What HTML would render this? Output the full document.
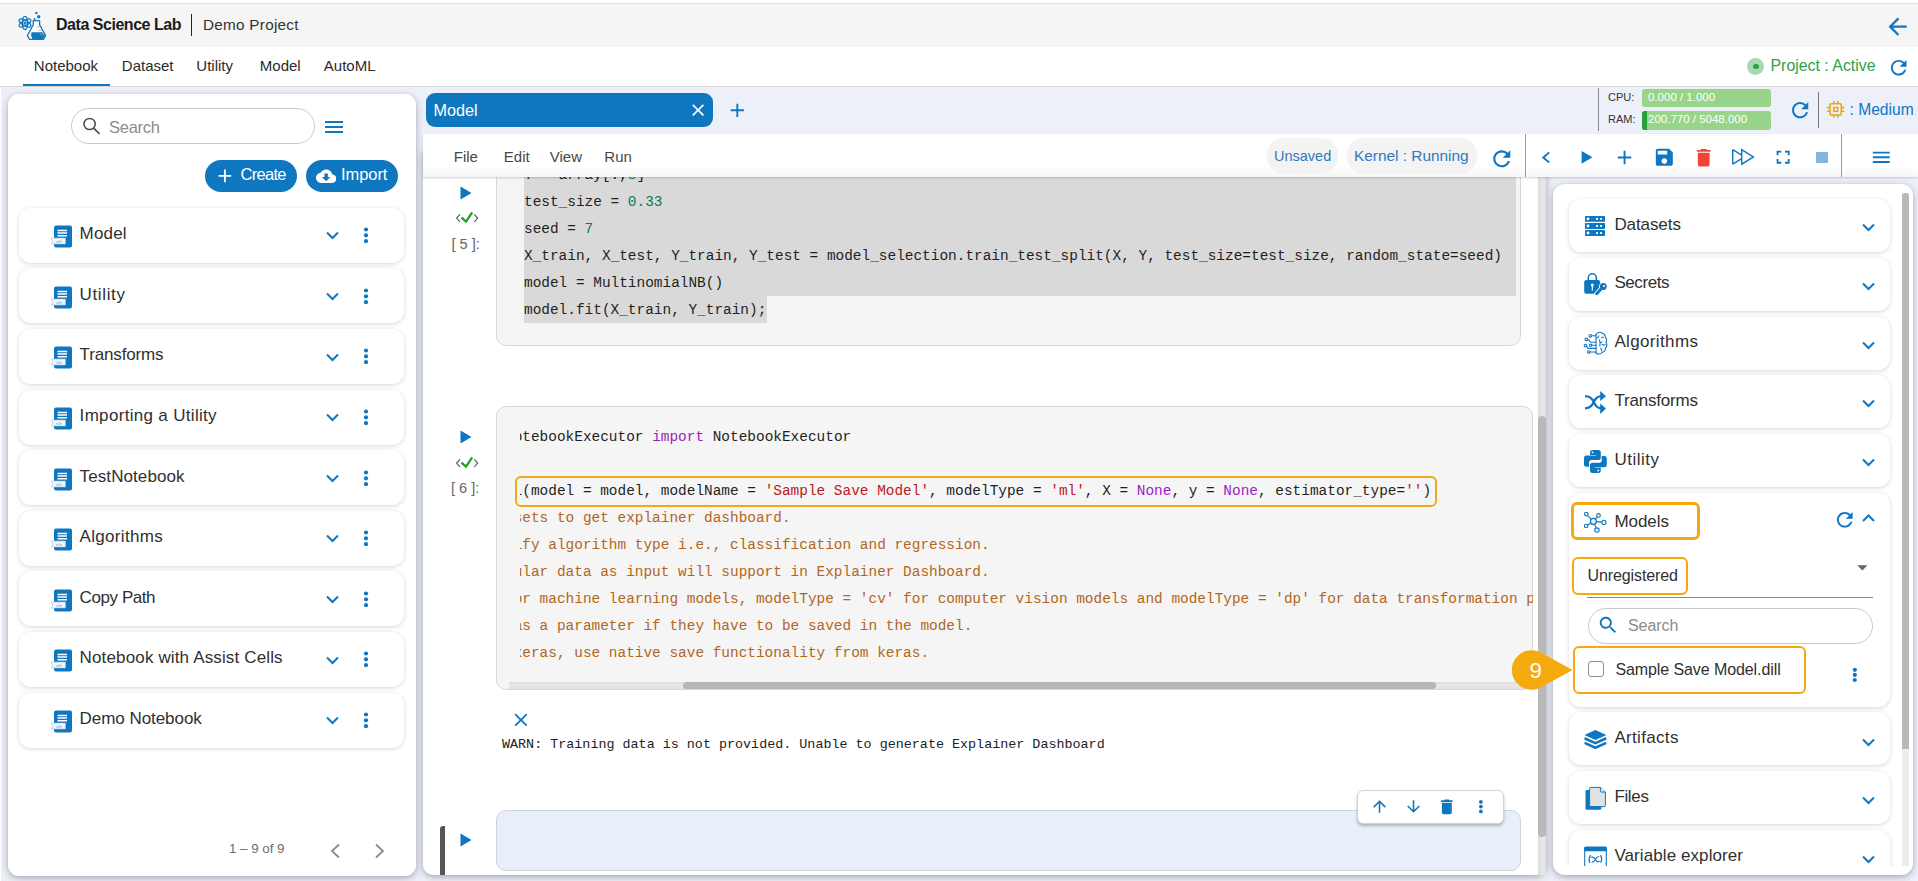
<!DOCTYPE html><html><head><meta charset="utf-8"><style>html,body{margin:0;padding:0;width:1918px;height:881px;overflow:hidden;background:#edf0f9;font-family:"Liberation Sans",sans-serif;}body{position:relative;}</style></head><body>
<div style="position:absolute;left:0px;top:0px;width:1918px;height:3px;background:#fff"></div>
<div style="position:absolute;left:0px;top:3px;width:1918px;height:44px;background:#f5f5f5;border-top:1px solid #e2e2e2;box-sizing:border-box"></div>
<svg style="position:absolute;left:14px;top:8px;" width="40" height="36" viewBox="14 8 40 36"><g fill="none" stroke="#0f77c0" stroke-width="1.25"><ellipse cx="25" cy="23" rx="6.6" ry="2.6" transform="rotate(90 25 23)"/><ellipse cx="25" cy="23" rx="6.6" ry="2.6" transform="rotate(30 25 23)"/><ellipse cx="25" cy="23" rx="6.6" ry="2.6" transform="rotate(-30 25 23)"/><circle cx="25" cy="23" r="1"/></g><path d="M33.3 20.6 H39.6 V24.8 L45.6 35.6 L43.4 39.4 H29.6 L27.4 35.6 L33.3 24.8 Z" fill="#fff" stroke="#0f77c0" stroke-width="1.3" stroke-linejoin="round"/><path d="M31.6 32.2 H42.2 L45 35.6 L43 39 H32.5 L31 35.6 Z" fill="#0f77c0"/><g stroke="#9aa" stroke-width="0.8"><path d="M36.5 26.8H40.3M38 30.3H41.5M40 34.2H44"/></g><circle cx="36.4" cy="13" r="1.2" fill="#0f77c0"/><circle cx="38.7" cy="16.8" r="1.7" fill="#0f77c0"/><circle cx="34.6" cy="19" r="1" fill="#0f77c0"/></svg>
<div style="position:absolute;left:56px;top:16.56px;font-family:'Liberation Sans', sans-serif;font-size:16px;line-height:16px;color:#1b1b1b;font-weight:bold;white-space:pre;letter-spacing:-0.467px">Data Science Lab</div>
<div style="position:absolute;left:190.8px;top:14px;width:1.6px;height:21.7px;background:#222"></div>
<div style="position:absolute;left:203px;top:17.15px;font-family:'Liberation Sans', sans-serif;font-size:15.3px;line-height:15.3px;color:#333;font-weight:normal;white-space:pre;letter-spacing:0.255px">Demo Project</div>
<svg style="position:absolute;left:1884.25px;top:13.15px" width="27.30" height="27.30" viewBox="0 0 24 24"><path d="M20 11H7.83l5.59-5.59L12 4l-8 8 8 8 1.41-1.41L7.83 13H20v-2z" fill="#0f77c0"/></svg>
<div style="position:absolute;left:0px;top:47px;width:1918px;height:39px;background:#fff"></div>
<div style="position:absolute;left:0px;top:86px;width:1918px;height:1px;background:#d8d8d8"></div>
<div style="position:absolute;left:33.8px;top:57.70px;font-family:'Liberation Sans', sans-serif;font-size:15px;line-height:15px;color:#2b2b2b;font-weight:normal;white-space:pre;">Notebook</div>
<div style="position:absolute;left:121.8px;top:57.70px;font-family:'Liberation Sans', sans-serif;font-size:15px;line-height:15px;color:#2b2b2b;font-weight:normal;white-space:pre;">Dataset</div>
<div style="position:absolute;left:196.3px;top:57.70px;font-family:'Liberation Sans', sans-serif;font-size:15px;line-height:15px;color:#2b2b2b;font-weight:normal;white-space:pre;">Utility</div>
<div style="position:absolute;left:259.8px;top:57.70px;font-family:'Liberation Sans', sans-serif;font-size:15px;line-height:15px;color:#2b2b2b;font-weight:normal;white-space:pre;">Model</div>
<div style="position:absolute;left:323.8px;top:57.70px;font-family:'Liberation Sans', sans-serif;font-size:15px;line-height:15px;color:#2b2b2b;font-weight:normal;white-space:pre;">AutoML</div>
<div style="position:absolute;left:23px;top:84px;width:87px;height:2px;background:#0f77c0"></div>
<div style="position:absolute;left:1747px;top:58px;width:17px;height:17px;border-radius:50%;background:#a6dab2"></div>
<div style="position:absolute;left:1753px;top:64px;width:6px;height:5px;border-radius:50%;background:#2aa148"></div>
<div style="position:absolute;left:1770.5px;top:57.64px;font-family:'Liberation Sans', sans-serif;font-size:15.9px;line-height:15.9px;color:#2ba34a;font-weight:normal;white-space:pre;">Project : Active</div>
<svg style="position:absolute;left:1886.90px;top:55.80px" width="23.40" height="23.40" viewBox="0 0 24 24"><path d="M17.65 6.35C16.2 4.9 14.21 4 12 4c-4.42 0-7.99 3.58-7.99 8s3.57 8 7.99 8c3.73 0 6.84-2.55 7.73-6h-2.08c-.82 2.33-3.04 4-5.65 4-3.31 0-6-2.69-6-6s2.69-6 6-6c1.66 0 3.14.69 4.22 1.78L13 11h7V4l-2.35 2.35z" fill="#0f77c0"/></svg>
<div style="position:absolute;left:0px;top:87px;width:1px;height:794px;background:#fff"></div>
<div style="position:absolute;left:8px;top:94px;width:408px;height:782px;background:#fff;border-radius:11px;box-shadow:0 2px 7px rgba(60,64,82,0.42)"></div>
<div style="position:absolute;left:71px;top:108px;width:244px;height:36px;box-sizing:border-box;border:1px solid #c9c9c9;border-radius:18px;background:#fff"></div>
<svg style="position:absolute;left:80px;top:114px;overflow:visible" width="24" height="24" viewBox="80 114 24 24"><g fill="none" stroke="#4a4a4a"><circle cx="89.6" cy="124" r="5.6" stroke-width="1.5"/><path d="M93.7 128.1 L99.6 134" stroke-width="1.7"/></g></svg>
<div style="position:absolute;left:109px;top:118.83px;font-family:'Liberation Sans', sans-serif;font-size:16.5px;line-height:16.5px;color:#8c8c8c;font-weight:normal;white-space:pre;letter-spacing:-0.260px">Search</div>
<svg style="position:absolute;left:322.00px;top:115.00px" width="24.00" height="24.00" viewBox="0 0 24 24"><path d="M3 18h18v-2H3v2zm0-5h18v-2H3v2zm0-7v2h18V6H3z" fill="#0f77c0"/></svg>
<div style="position:absolute;left:205px;top:160px;width:92px;height:32px;border-radius:16px;background:#0f77c0"></div>
<svg style="position:absolute;left:214.46px;top:165.46px" width="21.77" height="21.77" viewBox="0 0 24 24"><path d="M19 13h-6v6h-2v-6H5v-2h6V5h2v6h6v2z" fill="#fff"/></svg>
<div style="position:absolute;left:240.5px;top:166.23px;font-family:'Liberation Sans', sans-serif;font-size:16.5px;line-height:16.5px;color:#fff;font-weight:normal;white-space:pre;letter-spacing:-0.700px">Create</div>
<div style="position:absolute;left:306px;top:160px;width:92px;height:32px;border-radius:16px;background:#0f77c0"></div>
<svg style="position:absolute;left:315.70px;top:166.42px" width="20.30" height="20.30" viewBox="0 0 24 24"><path d="M19.35 10.04C18.67 6.59 15.64 4 12 4 9.11 4 6.6 5.64 5.35 8.04 2.34 8.36 0 10.91 0 14c0 3.31 2.69 6 6 6h13c2.76 0 5-2.24 5-5 0-2.64-2.05-4.78-4.65-4.96zM17 13l-5 5-5-5h3V9h4v4h3z" fill="#fff"/></svg>
<div style="position:absolute;left:341px;top:166.23px;font-family:'Liberation Sans', sans-serif;font-size:16.5px;line-height:16.5px;color:#fff;font-weight:normal;white-space:pre;letter-spacing:-0.070px">Import</div>
<div style="position:absolute;left:19px;top:207.70px;width:385px;height:55px;background:#fff;border-radius:12px;box-shadow:0 1px 4px rgba(0,0,0,0.16)"></div>
<svg style="position:absolute;left:51px;top:225.0px;" width="22" height="23" viewBox="0 0 22 23"><rect x="3" y="0.5" width="18" height="22" rx="2" fill="#0f77c0"/><g stroke="#fff" stroke-width="1.6"><path d="M6.5 5.5H16M6.5 8H16M6.5 10.8H16"/></g><path d="M0 13 L14.5 13 L14.5 19 L0 19 L2 16 Z" fill="#f4f6f8" stroke="#9cc3e6" stroke-width="0.6"/><text x="8" y="17.6" font-size="4" fill="#0f77c0" font-family="Liberation Sans" text-anchor="middle">&lt;/&gt;</text></svg>
<div style="position:absolute;left:79.6px;top:225.41px;font-family:'Liberation Sans', sans-serif;font-size:17px;line-height:17px;color:#303030;font-weight:normal;white-space:pre;letter-spacing:0.175px">Model</div>
<svg style="position:absolute;left:325.5px;top:231.29999999999998px;" width="13" height="9" viewBox="0 0 13 9"><path d="M1 1.5 L6.5 7 L12 1.5" fill="none" stroke="#0f77c0" stroke-width="2"/></svg>
<svg style="position:absolute;left:363.1px;top:227.0px;" width="6" height="16" viewBox="0 0 6 16"><circle cx="3" cy="2.50" r="2.1" fill="#0f77c0"/><circle cx="3" cy="8.30" r="2.1" fill="#0f77c0"/><circle cx="3" cy="14.10" r="2.1" fill="#0f77c0"/></svg>
<div style="position:absolute;left:19px;top:268.32px;width:385px;height:55px;background:#fff;border-radius:12px;box-shadow:0 1px 4px rgba(0,0,0,0.16)"></div>
<svg style="position:absolute;left:51px;top:285.625px;" width="22" height="23" viewBox="0 0 22 23"><rect x="3" y="0.5" width="18" height="22" rx="2" fill="#0f77c0"/><g stroke="#fff" stroke-width="1.6"><path d="M6.5 5.5H16M6.5 8H16M6.5 10.8H16"/></g><path d="M0 13 L14.5 13 L14.5 19 L0 19 L2 16 Z" fill="#f4f6f8" stroke="#9cc3e6" stroke-width="0.6"/><text x="8" y="17.6" font-size="4" fill="#0f77c0" font-family="Liberation Sans" text-anchor="middle">&lt;/&gt;</text></svg>
<div style="position:absolute;left:79.6px;top:285.94px;font-family:'Liberation Sans', sans-serif;font-size:17px;line-height:17px;color:#303030;font-weight:normal;white-space:pre;letter-spacing:0.625px">Utility</div>
<svg style="position:absolute;left:325.5px;top:291.925px;" width="13" height="9" viewBox="0 0 13 9"><path d="M1 1.5 L6.5 7 L12 1.5" fill="none" stroke="#0f77c0" stroke-width="2"/></svg>
<svg style="position:absolute;left:363.1px;top:287.625px;" width="6" height="16" viewBox="0 0 6 16"><circle cx="3" cy="2.50" r="2.1" fill="#0f77c0"/><circle cx="3" cy="8.30" r="2.1" fill="#0f77c0"/><circle cx="3" cy="14.10" r="2.1" fill="#0f77c0"/></svg>
<div style="position:absolute;left:19px;top:328.95px;width:385px;height:55px;background:#fff;border-radius:12px;box-shadow:0 1px 4px rgba(0,0,0,0.16)"></div>
<svg style="position:absolute;left:51px;top:346.25px;" width="22" height="23" viewBox="0 0 22 23"><rect x="3" y="0.5" width="18" height="22" rx="2" fill="#0f77c0"/><g stroke="#fff" stroke-width="1.6"><path d="M6.5 5.5H16M6.5 8H16M6.5 10.8H16"/></g><path d="M0 13 L14.5 13 L14.5 19 L0 19 L2 16 Z" fill="#f4f6f8" stroke="#9cc3e6" stroke-width="0.6"/><text x="8" y="17.6" font-size="4" fill="#0f77c0" font-family="Liberation Sans" text-anchor="middle">&lt;/&gt;</text></svg>
<div style="position:absolute;left:79.6px;top:346.47px;font-family:'Liberation Sans', sans-serif;font-size:17px;line-height:17px;color:#303030;font-weight:normal;white-space:pre;letter-spacing:-0.144px">Transforms</div>
<svg style="position:absolute;left:325.5px;top:352.55px;" width="13" height="9" viewBox="0 0 13 9"><path d="M1 1.5 L6.5 7 L12 1.5" fill="none" stroke="#0f77c0" stroke-width="2"/></svg>
<svg style="position:absolute;left:363.1px;top:348.25px;" width="6" height="16" viewBox="0 0 6 16"><circle cx="3" cy="2.50" r="2.1" fill="#0f77c0"/><circle cx="3" cy="8.30" r="2.1" fill="#0f77c0"/><circle cx="3" cy="14.10" r="2.1" fill="#0f77c0"/></svg>
<div style="position:absolute;left:19px;top:389.57px;width:385px;height:55px;background:#fff;border-radius:12px;box-shadow:0 1px 4px rgba(0,0,0,0.16)"></div>
<svg style="position:absolute;left:51px;top:406.875px;" width="22" height="23" viewBox="0 0 22 23"><rect x="3" y="0.5" width="18" height="22" rx="2" fill="#0f77c0"/><g stroke="#fff" stroke-width="1.6"><path d="M6.5 5.5H16M6.5 8H16M6.5 10.8H16"/></g><path d="M0 13 L14.5 13 L14.5 19 L0 19 L2 16 Z" fill="#f4f6f8" stroke="#9cc3e6" stroke-width="0.6"/><text x="8" y="17.6" font-size="4" fill="#0f77c0" font-family="Liberation Sans" text-anchor="middle">&lt;/&gt;</text></svg>
<div style="position:absolute;left:79.6px;top:407.00px;font-family:'Liberation Sans', sans-serif;font-size:17px;line-height:17px;color:#303030;font-weight:normal;white-space:pre;letter-spacing:0.317px">Importing a Utility</div>
<svg style="position:absolute;left:325.5px;top:413.175px;" width="13" height="9" viewBox="0 0 13 9"><path d="M1 1.5 L6.5 7 L12 1.5" fill="none" stroke="#0f77c0" stroke-width="2"/></svg>
<svg style="position:absolute;left:363.1px;top:408.875px;" width="6" height="16" viewBox="0 0 6 16"><circle cx="3" cy="2.50" r="2.1" fill="#0f77c0"/><circle cx="3" cy="8.30" r="2.1" fill="#0f77c0"/><circle cx="3" cy="14.10" r="2.1" fill="#0f77c0"/></svg>
<div style="position:absolute;left:19px;top:450.20px;width:385px;height:55px;background:#fff;border-radius:12px;box-shadow:0 1px 4px rgba(0,0,0,0.16)"></div>
<svg style="position:absolute;left:51px;top:467.5px;" width="22" height="23" viewBox="0 0 22 23"><rect x="3" y="0.5" width="18" height="22" rx="2" fill="#0f77c0"/><g stroke="#fff" stroke-width="1.6"><path d="M6.5 5.5H16M6.5 8H16M6.5 10.8H16"/></g><path d="M0 13 L14.5 13 L14.5 19 L0 19 L2 16 Z" fill="#f4f6f8" stroke="#9cc3e6" stroke-width="0.6"/><text x="8" y="17.6" font-size="4" fill="#0f77c0" font-family="Liberation Sans" text-anchor="middle">&lt;/&gt;</text></svg>
<div style="position:absolute;left:79.6px;top:467.53px;font-family:'Liberation Sans', sans-serif;font-size:17px;line-height:17px;color:#303030;font-weight:normal;white-space:pre;letter-spacing:0.091px">TestNotebook</div>
<svg style="position:absolute;left:325.5px;top:473.8px;" width="13" height="9" viewBox="0 0 13 9"><path d="M1 1.5 L6.5 7 L12 1.5" fill="none" stroke="#0f77c0" stroke-width="2"/></svg>
<svg style="position:absolute;left:363.1px;top:469.5px;" width="6" height="16" viewBox="0 0 6 16"><circle cx="3" cy="2.50" r="2.1" fill="#0f77c0"/><circle cx="3" cy="8.30" r="2.1" fill="#0f77c0"/><circle cx="3" cy="14.10" r="2.1" fill="#0f77c0"/></svg>
<div style="position:absolute;left:19px;top:510.82px;width:385px;height:55px;background:#fff;border-radius:12px;box-shadow:0 1px 4px rgba(0,0,0,0.16)"></div>
<svg style="position:absolute;left:51px;top:528.125px;" width="22" height="23" viewBox="0 0 22 23"><rect x="3" y="0.5" width="18" height="22" rx="2" fill="#0f77c0"/><g stroke="#fff" stroke-width="1.6"><path d="M6.5 5.5H16M6.5 8H16M6.5 10.8H16"/></g><path d="M0 13 L14.5 13 L14.5 19 L0 19 L2 16 Z" fill="#f4f6f8" stroke="#9cc3e6" stroke-width="0.6"/><text x="8" y="17.6" font-size="4" fill="#0f77c0" font-family="Liberation Sans" text-anchor="middle">&lt;/&gt;</text></svg>
<div style="position:absolute;left:79.6px;top:528.06px;font-family:'Liberation Sans', sans-serif;font-size:17px;line-height:17px;color:#303030;font-weight:normal;white-space:pre;letter-spacing:0.311px">Algorithms</div>
<svg style="position:absolute;left:325.5px;top:534.425px;" width="13" height="9" viewBox="0 0 13 9"><path d="M1 1.5 L6.5 7 L12 1.5" fill="none" stroke="#0f77c0" stroke-width="2"/></svg>
<svg style="position:absolute;left:363.1px;top:530.125px;" width="6" height="16" viewBox="0 0 6 16"><circle cx="3" cy="2.50" r="2.1" fill="#0f77c0"/><circle cx="3" cy="8.30" r="2.1" fill="#0f77c0"/><circle cx="3" cy="14.10" r="2.1" fill="#0f77c0"/></svg>
<div style="position:absolute;left:19px;top:571.45px;width:385px;height:55px;background:#fff;border-radius:12px;box-shadow:0 1px 4px rgba(0,0,0,0.16)"></div>
<svg style="position:absolute;left:51px;top:588.75px;" width="22" height="23" viewBox="0 0 22 23"><rect x="3" y="0.5" width="18" height="22" rx="2" fill="#0f77c0"/><g stroke="#fff" stroke-width="1.6"><path d="M6.5 5.5H16M6.5 8H16M6.5 10.8H16"/></g><path d="M0 13 L14.5 13 L14.5 19 L0 19 L2 16 Z" fill="#f4f6f8" stroke="#9cc3e6" stroke-width="0.6"/><text x="8" y="17.6" font-size="4" fill="#0f77c0" font-family="Liberation Sans" text-anchor="middle">&lt;/&gt;</text></svg>
<div style="position:absolute;left:79.6px;top:588.59px;font-family:'Liberation Sans', sans-serif;font-size:17px;line-height:17px;color:#303030;font-weight:normal;white-space:pre;letter-spacing:-0.425px">Copy Path</div>
<svg style="position:absolute;left:325.5px;top:595.0500000000001px;" width="13" height="9" viewBox="0 0 13 9"><path d="M1 1.5 L6.5 7 L12 1.5" fill="none" stroke="#0f77c0" stroke-width="2"/></svg>
<svg style="position:absolute;left:363.1px;top:590.75px;" width="6" height="16" viewBox="0 0 6 16"><circle cx="3" cy="2.50" r="2.1" fill="#0f77c0"/><circle cx="3" cy="8.30" r="2.1" fill="#0f77c0"/><circle cx="3" cy="14.10" r="2.1" fill="#0f77c0"/></svg>
<div style="position:absolute;left:19px;top:632.08px;width:385px;height:55px;background:#fff;border-radius:12px;box-shadow:0 1px 4px rgba(0,0,0,0.16)"></div>
<svg style="position:absolute;left:51px;top:649.375px;" width="22" height="23" viewBox="0 0 22 23"><rect x="3" y="0.5" width="18" height="22" rx="2" fill="#0f77c0"/><g stroke="#fff" stroke-width="1.6"><path d="M6.5 5.5H16M6.5 8H16M6.5 10.8H16"/></g><path d="M0 13 L14.5 13 L14.5 19 L0 19 L2 16 Z" fill="#f4f6f8" stroke="#9cc3e6" stroke-width="0.6"/><text x="8" y="17.6" font-size="4" fill="#0f77c0" font-family="Liberation Sans" text-anchor="middle">&lt;/&gt;</text></svg>
<div style="position:absolute;left:79.6px;top:649.12px;font-family:'Liberation Sans', sans-serif;font-size:17px;line-height:17px;color:#303030;font-weight:normal;white-space:pre;letter-spacing:0.146px">Notebook with Assist Cells</div>
<svg style="position:absolute;left:325.5px;top:655.6750000000001px;" width="13" height="9" viewBox="0 0 13 9"><path d="M1 1.5 L6.5 7 L12 1.5" fill="none" stroke="#0f77c0" stroke-width="2"/></svg>
<svg style="position:absolute;left:363.1px;top:651.375px;" width="6" height="16" viewBox="0 0 6 16"><circle cx="3" cy="2.50" r="2.1" fill="#0f77c0"/><circle cx="3" cy="8.30" r="2.1" fill="#0f77c0"/><circle cx="3" cy="14.10" r="2.1" fill="#0f77c0"/></svg>
<div style="position:absolute;left:19px;top:692.70px;width:385px;height:55px;background:#fff;border-radius:12px;box-shadow:0 1px 4px rgba(0,0,0,0.16)"></div>
<svg style="position:absolute;left:51px;top:710.0px;" width="22" height="23" viewBox="0 0 22 23"><rect x="3" y="0.5" width="18" height="22" rx="2" fill="#0f77c0"/><g stroke="#fff" stroke-width="1.6"><path d="M6.5 5.5H16M6.5 8H16M6.5 10.8H16"/></g><path d="M0 13 L14.5 13 L14.5 19 L0 19 L2 16 Z" fill="#f4f6f8" stroke="#9cc3e6" stroke-width="0.6"/><text x="8" y="17.6" font-size="4" fill="#0f77c0" font-family="Liberation Sans" text-anchor="middle">&lt;/&gt;</text></svg>
<div style="position:absolute;left:79.6px;top:709.65px;font-family:'Liberation Sans', sans-serif;font-size:17px;line-height:17px;color:#303030;font-weight:normal;white-space:pre;letter-spacing:-0.050px">Demo Notebook</div>
<svg style="position:absolute;left:325.5px;top:716.3000000000001px;" width="13" height="9" viewBox="0 0 13 9"><path d="M1 1.5 L6.5 7 L12 1.5" fill="none" stroke="#0f77c0" stroke-width="2"/></svg>
<svg style="position:absolute;left:363.1px;top:712.0px;" width="6" height="16" viewBox="0 0 6 16"><circle cx="3" cy="2.50" r="2.1" fill="#0f77c0"/><circle cx="3" cy="8.30" r="2.1" fill="#0f77c0"/><circle cx="3" cy="14.10" r="2.1" fill="#0f77c0"/></svg>
<div style="position:absolute;left:229px;top:842.04px;font-family:'Liberation Sans', sans-serif;font-size:13.3px;line-height:13.3px;color:#6d6d6d;font-weight:normal;white-space:pre;">1 – 9 of 9</div>
<svg style="position:absolute;left:329px;top:843px;" width="12" height="16" viewBox="0 0 12 16"><path d="M10 1.5 L3 8 L10 14.5" fill="none" stroke="#8a8a8a" stroke-width="1.8"/></svg>
<svg style="position:absolute;left:374px;top:843px;" width="12" height="16" viewBox="0 0 12 16"><path d="M2 1.5 L9 8 L2 14.5" fill="none" stroke="#8a8a8a" stroke-width="1.8"/></svg>
<div style="position:absolute;left:426px;top:93px;width:287px;height:34px;border-radius:9px;background:#0f77c0"></div>
<div style="position:absolute;left:433.5px;top:101.59px;font-family:'Liberation Sans', sans-serif;font-size:16.2px;line-height:16.2px;color:#fff;font-weight:normal;white-space:pre;">Model</div>
<svg style="position:absolute;left:687.79px;top:99.59px" width="20.23" height="20.23" viewBox="0 0 24 24"><path d="M19 6.41L17.59 5 12 10.59 6.41 5 5 6.41 10.59 12 5 17.59 6.41 19 12 13.41 17.59 19 19 17.59 13.41 12z" fill="#fff"/></svg>
<svg style="position:absolute;left:726.29px;top:98.99px" width="22.63" height="22.63" viewBox="0 0 24 24"><path d="M19 13h-6v6h-2v-6H5v-2h6V5h2v6h6v2z" fill="#0f77c0"/></svg>
<div style="position:absolute;left:423px;top:150px;width:1123px;height:725px;background:#fff;border-radius:0 0 10px 10px;box-shadow:0 2px 7px rgba(60,64,82,0.42)"></div>
<div style="position:absolute;left:496px;top:150px;width:1025px;height:196px;box-sizing:border-box;border:1px solid #d8d8d8;border-radius:10px;background:#f5f5f5"></div>
<div style="position:absolute;left:524px;top:150px;width:992px;height:146px;background:#d9d9d9"></div>
<div style="position:absolute;left:524px;top:296px;width:242.5px;height:26.5px;background:#d9d9d9"></div>
<div style="position:absolute;left:524px;top:167.94px;font-family:'Liberation Mono', monospace;font-size:14.43px;line-height:14.43px;color:#1f1f1f;font-weight:normal;white-space:pre;">Y = array[:,<span style="color:#0d7a4e">8</span>]</div>
<div style="position:absolute;left:524px;top:194.94px;font-family:'Liberation Mono', monospace;font-size:14.43px;line-height:14.43px;color:#1f1f1f;font-weight:normal;white-space:pre;">test_size = <span style="color:#0d7a4e">0.33</span></div>
<div style="position:absolute;left:524px;top:221.94px;font-family:'Liberation Mono', monospace;font-size:14.43px;line-height:14.43px;color:#1f1f1f;font-weight:normal;white-space:pre;">seed = <span style="color:#0d7a4e">7</span></div>
<div style="position:absolute;left:524px;top:248.94px;font-family:'Liberation Mono', monospace;font-size:14.43px;line-height:14.43px;color:#1f1f1f;font-weight:normal;white-space:pre;">X_train, X_test, Y_train, Y_test = model_selection.train_test_split(X, Y, test_size=test_size, random_state=seed)</div>
<div style="position:absolute;left:524px;top:275.94px;font-family:'Liberation Mono', monospace;font-size:14.43px;line-height:14.43px;color:#1f1f1f;font-weight:normal;white-space:pre;">model = MultinomialNB()</div>
<div style="position:absolute;left:524px;top:302.94px;font-family:'Liberation Mono', monospace;font-size:14.43px;line-height:14.43px;color:#1f1f1f;font-weight:normal;white-space:pre;">model.fit(X_train, Y_train);</div>
<svg style="position:absolute;left:460px;top:186px;" width="12" height="14" viewBox="0 0 12 14"><path d="M0.5 0.5 L11.5 7 L0.5 13.5 Z" fill="#0f77c0"/></svg>
<svg style="position:absolute;left:450px;top:205.0px;overflow:visible" width="36" height="23.0" viewBox="450 205.0 36 23.0"><g transform="translate(0 0.0)"><g fill="none" stroke="#555" stroke-width="1.1"><path d="M460 214.3 L456.6 218.1 L460 221.9"/><path d="M474.3 214.3 L477.7 218.1 L474.3 221.9"/></g><path d="M461.5 217.6 L466 221.6 L472.2 212.3" fill="none" stroke="#19a319" stroke-width="2.2"/></g></svg>
<div style="position:absolute;left:451.5px;top:237.04px;font-family:'Liberation Sans', sans-serif;font-size:14.6px;line-height:14.6px;color:#666;font-weight:normal;white-space:pre;">[ 5 ]:</div>
<div style="position:absolute;left:496px;top:405.5px;width:1037px;height:284px;box-sizing:border-box;border:1px solid #d8d8d8;border-radius:10px;background:#f5f5f5;overflow:hidden"></div>
<div style="position:absolute;left:519.5px;top:420px;width:1013px;height:255px;overflow:hidden">
<div style="position:absolute;left:-5.86px;top:9.64px;font-family:'Liberation Mono', monospace;font-size:14.43px;line-height:14.43px;color:#1f1f1f;white-space:pre">otebookExecutor <span style="color:#9a1ec0">import</span> NotebookExecutor</div>
<div style="position:absolute;left:-5.86px;top:63.54px;font-family:'Liberation Mono', monospace;font-size:14.43px;line-height:14.43px;color:#1f1f1f;white-space:pre">l(model = model, modelName = <span style="color:#b81b1b">'Sample Save Model'</span>, modelType = <span style="color:#b81b1b">'ml'</span>, X = <span style="color:#9a1ec0">None</span>, y = <span style="color:#9a1ec0">None</span>, estimator_type=<span style="color:#b81b1b">''</span>)</div>
<div style="position:absolute;left:-5.86px;top:90.94px;font-family:'Liberation Mono', monospace;font-size:14.43px;line-height:14.43px;color:#b3661b;white-space:pre">sets to get explainer dashboard.</div>
<div style="position:absolute;left:-5.86px;top:117.94px;font-family:'Liberation Mono', monospace;font-size:14.43px;line-height:14.43px;color:#b3661b;white-space:pre">ify algorithm type i.e., classification and regression.</div>
<div style="position:absolute;left:-5.86px;top:144.94px;font-family:'Liberation Mono', monospace;font-size:14.43px;line-height:14.43px;color:#b3661b;white-space:pre">ular data as input will support in Explainer Dashboard.</div>
<div style="position:absolute;left:-5.86px;top:171.94px;font-family:'Liberation Mono', monospace;font-size:14.43px;line-height:14.43px;color:#b3661b;white-space:pre">or machine learning models, modelType = 'cv' for computer vision models and modelType = 'dp' for data transformation pipelines</div>
<div style="position:absolute;left:-5.86px;top:198.94px;font-family:'Liberation Mono', monospace;font-size:14.43px;line-height:14.43px;color:#b3661b;white-space:pre">as a parameter if they have to be saved in the model.</div>
<div style="position:absolute;left:-5.86px;top:225.94px;font-family:'Liberation Mono', monospace;font-size:14.43px;line-height:14.43px;color:#b3661b;white-space:pre">keras, use native save functionality from keras.</div>
</div>
<div style="position:absolute;left:515px;top:475.5px;width:922px;height:31px;box-sizing:border-box;border:2.5px solid #f2a814;border-radius:6px"></div>
<div style="position:absolute;left:509px;top:682px;width:1023px;height:7.4px;background:linear-gradient(#dcdcdc,#e8e8e8 40%,#e2e2e2)"></div>
<div style="position:absolute;left:683px;top:682px;width:753px;height:7.2px;background:#b7b7b7;border-radius:4px"></div>
<svg style="position:absolute;left:460px;top:430px;" width="12" height="14" viewBox="0 0 12 14"><path d="M0.5 0.5 L11.5 7 L0.5 13.5 Z" fill="#0f77c0"/></svg>
<svg style="position:absolute;left:450px;top:449.5px;overflow:visible" width="36" height="23.0" viewBox="450 449.5 36 23.0"><g transform="translate(0 244.5)"><g fill="none" stroke="#555" stroke-width="1.1"><path d="M460 214.3 L456.6 218.1 L460 221.9"/><path d="M474.3 214.3 L477.7 218.1 L474.3 221.9"/></g><path d="M461.5 217.6 L466 221.6 L472.2 212.3" fill="none" stroke="#19a319" stroke-width="2.2"/></g></svg>
<div style="position:absolute;left:451px;top:481.04px;font-family:'Liberation Sans', sans-serif;font-size:14.6px;line-height:14.6px;color:#666;font-weight:normal;white-space:pre;">[ 6 ]:</div>
<svg style="position:absolute;left:509.63px;top:709.23px" width="21.94" height="21.94" viewBox="0 0 24 24"><path d="M19 6.41L17.59 5 12 10.59 6.41 5 5 6.41 10.59 12 5 17.59 6.41 19 12 13.41 17.59 19 19 17.59 13.41 12z" fill="#0f77c0"/></svg>
<div style="position:absolute;left:502px;top:737.93px;font-family:'Liberation Mono', monospace;font-size:13.4px;line-height:13.4px;color:#222;font-weight:normal;white-space:pre;">WARN: Training data is not provided. Unable to generate Explainer Dashboard</div>
<div style="position:absolute;left:496px;top:810px;width:1025px;height:61px;box-sizing:border-box;border:1px solid #cfd4da;border-radius:10px;background:#e8effa"></div>
<div style="position:absolute;left:439.5px;top:825.5px;width:5.5px;height:49.5px;background:#555;border-radius:3px 0 0 0"></div>
<svg style="position:absolute;left:460px;top:833px;" width="12" height="14" viewBox="0 0 12 14"><path d="M0.5 0.5 L11.5 7 L0.5 13.5 Z" fill="#0f77c0"/></svg>
<div style="position:absolute;left:1357px;top:790px;width:147px;height:34px;box-sizing:border-box;border:1px solid #d2d2d2;border-radius:6px;background:#fff;box-shadow:0 2px 3px rgba(0,0,0,0.25)"></div>
<svg style="position:absolute;left:1370.12px;top:797.23px" width="19.05" height="19.05" viewBox="0 0 24 24"><path d="M4 12l1.41 1.41L11 7.83V20h2V7.83l5.58 5.59L20 12l-8-8-8 8z" fill="#0f77c0"/></svg>
<svg style="position:absolute;left:1403.83px;top:797.23px" width="19.05" height="19.05" viewBox="0 0 24 24"><path d="M20 12l-1.41-1.41L13 16.17V4h-2v12.17l-5.58-5.59L4 12l8 8 8-8z" fill="#0f77c0"/></svg>
<svg style="position:absolute;left:1437.39px;top:796.54px" width="19.71" height="19.71" viewBox="0 0 24 24"><path d="M6 19c0 1.1.9 2 2 2h8c1.1 0 2-.9 2-2V7H6v12zM19 4h-3.5l-1-1h-5l-1 1H5v2h14V4z" fill="#0f77c0"/></svg>
<svg style="position:absolute;left:1476px;top:797px;overflow:visible" width="10" height="20" viewBox="1476 797 10 20"><g fill="#0f77c0"><circle cx="1480.9" cy="801.9" r="1.9"/><circle cx="1480.9" cy="806.6" r="1.9"/><circle cx="1480.9" cy="811.4" r="1.9"/></g></svg>
<div style="position:absolute;left:1538px;top:177px;width:8px;height:698px;background:linear-gradient(90deg,#dcdcdc,#e8e8e8 50%,#e2e2e2)"></div>
<div style="position:absolute;left:1538px;top:416px;width:8px;height:421px;background:#b9b9b9;border-radius:4px"></div>
<div style="position:absolute;left:423px;top:133.5px;width:1495px;height:43.4px;background:linear-gradient(#fff 75%,#f6f6f6);box-shadow:0 1px 2px rgba(0,0,0,0.18)"></div>
<div style="position:absolute;left:453.8px;top:149.40px;font-family:'Liberation Sans', sans-serif;font-size:15px;line-height:15px;color:#474747;font-weight:normal;white-space:pre;">File</div>
<div style="position:absolute;left:503.8px;top:149.40px;font-family:'Liberation Sans', sans-serif;font-size:15px;line-height:15px;color:#474747;font-weight:normal;white-space:pre;">Edit</div>
<div style="position:absolute;left:549.8px;top:149.40px;font-family:'Liberation Sans', sans-serif;font-size:15px;line-height:15px;color:#474747;font-weight:normal;white-space:pre;">View</div>
<div style="position:absolute;left:604.3px;top:149.40px;font-family:'Liberation Sans', sans-serif;font-size:15px;line-height:15px;color:#474747;font-weight:normal;white-space:pre;">Run</div>
<div style="position:absolute;left:1267px;top:138px;width:71px;height:36px;border-radius:17px;background:#f3f3f3"></div>
<div style="position:absolute;left:1274px;top:148.93px;font-family:'Liberation Sans', sans-serif;font-size:14.5px;line-height:14.5px;color:#2f78be;font-weight:normal;white-space:pre;">Unsaved</div>
<div style="position:absolute;left:1347px;top:138px;width:130px;height:36px;border-radius:17px;background:#f3f3f3"></div>
<div style="position:absolute;left:1354px;top:148.16px;font-family:'Liberation Sans', sans-serif;font-size:15.4px;line-height:15.4px;color:#2f78be;font-weight:normal;white-space:pre;">Kernel : Running</div>
<svg style="position:absolute;left:1489.25px;top:145.75px" width="25.50" height="25.50" viewBox="0 0 24 24"><path d="M17.65 6.35C16.2 4.9 14.21 4 12 4c-4.42 0-7.99 3.58-7.99 8s3.57 8 7.99 8c3.73 0 6.84-2.55 7.73-6h-2.08c-.82 2.33-3.04 4-5.65 4-3.31 0-6-2.69-6-6s2.69-6 6-6c1.66 0 3.14.69 4.22 1.78L13 11h7V4l-2.35 2.35z" fill="#0f77c0"/></svg>
<div style="position:absolute;left:1525px;top:134px;width:1px;height:43px;background:#9a9a9a"></div>
<div style="position:absolute;left:1841px;top:134px;width:1px;height:43px;background:#9a9a9a"></div>
<svg style="position:absolute;left:1538px;top:148px;overflow:visible" width="16" height="20" viewBox="1538 148 16 20"><path d="M1549.2 152.4 L1543.3 157.45 L1549.2 162.5" fill="none" stroke="#0f77c0" stroke-width="1.9"/></svg>
<svg style="position:absolute;left:1578px;top:145px;overflow:visible" width="20" height="23" viewBox="1578 145 20 23"><path d="M1581.6 150.9 L1592.4 157.35 L1581.6 163.8 Z" fill="#0f77c0"/></svg>
<svg style="position:absolute;left:1613.28px;top:146.08px" width="23.14" height="23.14" viewBox="0 0 24 24"><path d="M19 13h-6v6h-2v-6H5v-2h6V5h2v6h6v2z" fill="#0f77c0"/></svg>
<svg style="position:absolute;left:1653.17px;top:146.17px" width="22.67" height="22.67" viewBox="0 0 24 24"><path d="M17 3H5c-1.11 0-2 .9-2 2v14c0 1.1.89 2 2 2h14c1.1 0 2-.9 2-2V7l-4-4zm-5 16c-1.66 0-3-1.34-3-3s1.34-3 3-3 3 1.34 3 3-1.34 3-3 3zm3-10H5V5h10v4z" fill="#0f77c0"/></svg>
<svg style="position:absolute;left:1692.11px;top:145.96px" width="23.49" height="23.49" viewBox="0 0 24 24"><path d="M6 19c0 1.1.9 2 2 2h8c1.1 0 2-.9 2-2V7H6v12zM19 4h-3.5l-1-1h-5l-1 1H5v2h14V4z" fill="#f44336"/></svg>
<svg style="position:absolute;left:1728px;top:145px;overflow:visible" width="30" height="23" viewBox="1728 145 30 23"><g fill="none" stroke="#0f77c0" stroke-width="1.4" stroke-linejoin="miter"><path d="M1732.7 149.6 L1741.7 155.1 M1741.7 158.7 L1732.7 164.2 Z M1732.7 149.6 V164.2"/><path d="M1741.7 149.6 L1753.4 156.9 L1741.7 164.2 Z"/></g></svg>
<svg style="position:absolute;left:1771.56px;top:146.46px" width="22.29" height="22.29" viewBox="0 0 24 24"><path d="M7 14H5v5h5v-2H7v-3zm-2-4h2V7h3V5H5v5zm12 7h-3v2h5v-5h-2v3zM14 5v2h3v3h2V5h-5z" fill="#0f77c0"/></svg>
<div style="position:absolute;left:1815.5px;top:152px;width:12.5px;height:11px;background:#85b5dd"></div>
<svg style="position:absolute;left:1870.18px;top:146.27px" width="22.53" height="22.53" viewBox="0 0 24 24"><path d="M3 18h18v-2H3v2zm0-5h18v-2H3v2zm0-7v2h18V6H3z" fill="#0f77c0"/></svg>
<div style="position:absolute;left:1598px;top:88px;width:1px;height:43px;background:#888"></div>
<div style="position:absolute;left:1608px;top:92.19px;font-family:'Liberation Sans', sans-serif;font-size:11px;line-height:11px;color:#333;font-weight:normal;white-space:pre;">CPU:</div>
<div style="position:absolute;left:1608px;top:114.19px;font-family:'Liberation Sans', sans-serif;font-size:11px;line-height:11px;color:#333;font-weight:normal;white-space:pre;">RAM:</div>
<div style="position:absolute;left:1642px;top:89px;width:129px;height:18px;border-radius:3px;background:#98d58b"></div>
<div style="position:absolute;left:1642px;top:111px;width:129px;height:19px;border-radius:3px;background:#98d58b;overflow:hidden"><div style="width:5px;height:19px;background:#27a03c"></div></div>
<div style="position:absolute;left:1648px;top:91.77px;font-family:'Liberation Sans', sans-serif;font-size:11.5px;line-height:11.5px;color:#fff;font-weight:normal;white-space:pre;">0.000 / 1.000</div>
<div style="position:absolute;left:1648px;top:113.77px;font-family:'Liberation Sans', sans-serif;font-size:11.5px;line-height:11.5px;color:#fff;font-weight:normal;white-space:pre;">200.770 / 5048.000</div>
<svg style="position:absolute;left:1787.75px;top:97.75px" width="24.30" height="24.30" viewBox="0 0 24 24"><path d="M17.65 6.35C16.2 4.9 14.21 4 12 4c-4.42 0-7.99 3.58-7.99 8s3.57 8 7.99 8c3.73 0 6.84-2.55 7.73-6h-2.08c-.82 2.33-3.04 4-5.65 4-3.31 0-6-2.69-6-6s2.69-6 6-6c1.66 0 3.14.69 4.22 1.78L13 11h7V4l-2.35 2.35z" fill="#0f77c0"/></svg>
<div style="position:absolute;left:1818px;top:91.5px;width:1px;height:36px;background:#777"></div>
<svg style="position:absolute;left:1824px;top:98px;overflow:visible" width="24" height="23" viewBox="1824 98 24 23"><g fill="none" stroke="#f5a300" stroke-width="1.6"><rect x="1830" y="103.8" width="11.3" height="11.2" rx="1"/><rect x="1833.8" y="107.5" width="3.9" height="3.8" stroke-width="1.4"/><path d="M1833.8 101 V103.5 M1837.7 101 V103.5 M1833.8 115.3 V117.8 M1837.7 115.3 V117.8 M1827 107.6 H1829.5 M1827 111.2 H1829.5 M1841.8 107.6 H1844.2 M1841.8 111.2 H1844.2"/></g></svg>
<div style="position:absolute;left:1849.5px;top:102.29px;font-family:'Liberation Sans', sans-serif;font-size:15.6px;line-height:15.6px;color:#0f77c0;font-weight:normal;white-space:pre;">: Medium</div>
<div style="position:absolute;left:1553px;top:183.5px;width:360px;height:691px;background:#fff;border-radius:12px;box-shadow:0 2px 7px rgba(60,64,82,0.42)"></div>
<div style="position:absolute;left:1902px;top:193px;width:7px;height:673px;background:#ededed"></div>
<div style="position:absolute;left:1902px;top:193px;width:7px;height:556px;background:#b9b9b9;border-radius:3px 3px 0 0"></div>
<div style="position:absolute;left:1560px;top:190px;width:340px;height:676px;overflow:hidden">
<div style="position:absolute;left:9px;top:8.90px;width:321px;height:53px;background:#fff;border-radius:12px;box-shadow:0 1px 4px rgba(0,0,0,0.16)"></div>
<div style="position:absolute;left:54.40px;top:25.51px;font-size:17px;line-height:17px;color:#303030;white-space:pre;letter-spacing:-0.086px;">Datasets</div>
<svg style="position:absolute;left:301.5px;top:32.900000000000006px" width="13" height="9" viewBox="0 0 13 9"><path d="M1 1.5 L6.5 7 L12 1.5" fill="none" stroke="#0f77c0" stroke-width="2"/></svg>
<div style="position:absolute;left:9px;top:67.70px;width:321px;height:53px;background:#fff;border-radius:12px;box-shadow:0 1px 4px rgba(0,0,0,0.16)"></div>
<div style="position:absolute;left:54.40px;top:84.31px;font-size:17px;line-height:17px;color:#303030;white-space:pre;letter-spacing:-0.408px;">Secrets</div>
<svg style="position:absolute;left:301.5px;top:91.69999999999999px" width="13" height="9" viewBox="0 0 13 9"><path d="M1 1.5 L6.5 7 L12 1.5" fill="none" stroke="#0f77c0" stroke-width="2"/></svg>
<div style="position:absolute;left:9px;top:126.50px;width:321px;height:53px;background:#fff;border-radius:12px;box-shadow:0 1px 4px rgba(0,0,0,0.16)"></div>
<div style="position:absolute;left:54.40px;top:143.11px;font-size:17px;line-height:17px;color:#303030;white-space:pre;letter-spacing:0.356px;">Algorithms</div>
<svg style="position:absolute;left:301.5px;top:150.5px" width="13" height="9" viewBox="0 0 13 9"><path d="M1 1.5 L6.5 7 L12 1.5" fill="none" stroke="#0f77c0" stroke-width="2"/></svg>
<div style="position:absolute;left:9px;top:185.30px;width:321px;height:53px;background:#fff;border-radius:12px;box-shadow:0 1px 4px rgba(0,0,0,0.16)"></div>
<div style="position:absolute;left:54.40px;top:201.91px;font-size:17px;line-height:17px;color:#303030;white-space:pre;letter-spacing:-0.200px;">Transforms</div>
<svg style="position:absolute;left:301.5px;top:209.29999999999995px" width="13" height="9" viewBox="0 0 13 9"><path d="M1 1.5 L6.5 7 L12 1.5" fill="none" stroke="#0f77c0" stroke-width="2"/></svg>
<div style="position:absolute;left:9px;top:244.10px;width:321px;height:53px;background:#fff;border-radius:12px;box-shadow:0 1px 4px rgba(0,0,0,0.16)"></div>
<div style="position:absolute;left:54.40px;top:260.71px;font-size:17px;line-height:17px;color:#303030;white-space:pre;letter-spacing:0.525px;">Utility</div>
<svg style="position:absolute;left:301.5px;top:268.1px" width="13" height="9" viewBox="0 0 13 9"><path d="M1 1.5 L6.5 7 L12 1.5" fill="none" stroke="#0f77c0" stroke-width="2"/></svg>
<svg style="position:absolute;left:20px;top:20px;overflow:visible" width="30" height="30" viewBox="1580 210 30 30"><g fill="#0f77c0"><rect x="1585" y="215.9" width="20" height="5.9" rx="0.6"/><rect x="1585" y="223" width="20" height="5.9" rx="0.6"/><rect x="1585" y="230.1" width="20" height="5.9" rx="0.6"/></g><g fill="#fff"><circle cx="1588" cy="218.85" r="1.45"/><circle cx="1588" cy="225.95" r="1.45"/><circle cx="1588" cy="233.05" r="1.45"/><rect x="1596.1" y="217.9" width="1.9" height="1.9"/><rect x="1600.1" y="217.9" width="1.9" height="1.9"/><rect x="1596.1" y="225" width="1.9" height="1.9"/><rect x="1600.1" y="225" width="1.9" height="1.9"/><rect x="1596.1" y="232.1" width="1.9" height="1.9"/><rect x="1600.1" y="232.1" width="1.9" height="1.9"/></g></svg>
<svg style="position:absolute;left:20px;top:78px;overflow:visible" width="32" height="30" viewBox="1580 268 32 30"><path d="M1588.3 280.5 V277.8 A4 4 0 0 1 1596.3 277.8 V280.5" fill="none" stroke="#0f77c0" stroke-width="1.6"/><rect x="1584.2" y="280.1" width="16" height="13.7" rx="2.2" fill="#0f77c0"/><circle cx="1592.3" cy="285" r="1.5" fill="#fff"/><rect x="1591.8" y="285" width="1.1" height="5.5" fill="#fff"/><path d="M1603.3 286.5 L1596.6 293.8" stroke="#fff" stroke-width="4.8" stroke-linecap="round"/><circle cx="1603.3" cy="286.5" r="4.4" fill="#fff"/><path d="M1603.3 286.5 L1596.6 293.8" stroke="#0f77c0" stroke-width="2.9" stroke-linecap="round"/><circle cx="1603.3" cy="286.5" r="3.4" fill="#0f77c0"/><circle cx="1604" cy="285.9" r="1" fill="#fff"/></svg>
<svg style="position:absolute;left:20px;top:138px;overflow:visible" width="32" height="30" viewBox="1580 328 32 30"><g fill="none" stroke="#0f77c0" stroke-width="1.1" stroke-linecap="round"><path d="M1596 334.5 V353"/><path d="M1596 334.5 C1597 332.5 1600 331.5 1602 333 C1604 333.5 1605 335 1605.3 337 C1606.5 338.5 1606.8 341 1606 342.5 C1607 344 1607 346.5 1605.5 348 C1605.5 350.5 1604 352 1602 352.5 C1601 354.5 1597.5 354.5 1596 353"/><path d="M1597 338 Q1598.6 337.4 1598.8 335.8 M1599.5 340 Q1600.6 343 1599.8 346 M1600 343 L1602 342 M1603.3 337.3 L1601.6 337.4 M1602.2 344.6 Q1603.8 345.4 1605.2 344.8 M1600.5 348.3 Q1602.2 349 1601.6 351"/><circle cx="1590.4" cy="335.8" r="1.3"/><path d="M1591.7 335.8 H1596"/><circle cx="1586.3" cy="339.3" r="1.3"/><path d="M1587.6 339.6 Q1589 339.8 1590 341.4 L1590.8 342.2 H1596"/><circle cx="1590.7" cy="345.3" r="1.2"/><path d="M1591.9 345.2 H1596"/><circle cx="1585.5" cy="345.5" r="1.3"/><path d="M1586.5 346.4 L1588.2 348.4 H1596"/><circle cx="1588.8" cy="352" r="1.3"/><path d="M1590.1 352 H1596"/></g></svg>
<svg style="position:absolute;left:20px;top:196px;overflow:visible" width="32" height="32" viewBox="1580 386 32 32"><g fill="none" stroke="#0f77c0" stroke-width="2.3"><path d="M1585 396.2 C1590 396.2 1592 398 1593.8 402.1 C1595.5 406 1598 408.3 1601.5 408.3"/><path d="M1585 408.3 C1590 408.3 1592 406 1593.8 402.1 C1595.5 398 1598 396.2 1601.5 396.2"/></g><path d="M1600.2 391 L1606 396.2 L1600.2 401 Z M1600.2 403.6 L1606 408.6 L1600.2 413.9 Z" fill="#0f77c0"/></svg>
<svg style="position:absolute;left:20px;top:255px;overflow:visible" width="32" height="31" viewBox="1580 445 32 31"><g><path d="M1592.5 449.9 H1598.3 Q1600.8 449.9 1600.8 452.4 V457.6 Q1600.8 460.1 1598.3 460.1 H1591.6 Q1589.1 460.1 1589.1 462.6 V466.7 H1586.5 Q1584 466.7 1584 464.2 V457.9 Q1584 455.6 1586.5 455.6 H1596 V455 H1590 V452.4 Q1590 449.9 1592.5 449.9 Z" fill="#0f77c0"/></g><g transform="rotate(180 1595.4 461.4)"><path d="M1592.5 449.9 H1598.3 Q1600.8 449.9 1600.8 452.4 V457.6 Q1600.8 460.1 1598.3 460.1 H1591.6 Q1589.1 460.1 1589.1 462.6 V466.7 H1586.5 Q1584 466.7 1584 464.2 V457.9 Q1584 455.6 1586.5 455.6 H1596 V455 H1590 V452.4 Q1590 449.9 1592.5 449.9 Z" fill="#0f77c0"/></g><path d="M1589.1 462.6 Q1589.1 460.1 1591.6 460.1 H1598.3 Q1600.8 460.1 1600.8 457.6" fill="none" stroke="#fff" stroke-width="0"/><circle cx="1592.5" cy="452.3" r="0.9" fill="#fff"/><circle cx="1598.3" cy="470.5" r="0.9" fill="#fff"/></svg>
<div style="position:absolute;left:9px;top:303.00px;width:321px;height:213.7px;background:#fff;border-radius:12px;box-shadow:0 1px 4px rgba(0,0,0,0.16)"></div>
<div style="position:absolute;left:11.299999999999955px;top:311.7px;width:128.5px;height:38px;box-sizing:border-box;border:3.5px solid #f5a90d;border-radius:6px"></div>
<svg style="position:absolute;left:20px;top:318px;overflow:visible" width="32" height="28" viewBox="1580 508 32 28"><g fill="none" stroke="#0f77c0" stroke-width="1.1"><path d="M1593.4 521.4 L1586.3 514.1 M1593.4 521.4 L1598.5 515.4 M1593.4 521.4 L1603.9 522.4 M1593.4 521.4 L1586.1 526 M1593.4 521.4 L1596.9 530.1"/></g><circle cx="1593.4" cy="521.4" r="3" fill="#ececec" stroke="#0f77c0" stroke-width="1.2"/><g fill="#f4f1ee" stroke="#0f77c0" stroke-width="1.1"><circle cx="1586.3" cy="514.1" r="1.8"/><circle cx="1598.5" cy="515.4" r="1.8"/><circle cx="1603.9" cy="522.4" r="2.1"/><circle cx="1586.1" cy="526" r="1.8"/><circle cx="1596.9" cy="530.1" r="2.2"/></g></svg>
<div style="position:absolute;left:54.40px;top:322.91px;font-size:17px;line-height:17px;color:#303030;white-space:pre;letter-spacing:-0.040px;">Models</div>
<svg style="position:absolute;left:273.38px;top:318.07px" width="23.55" height="23.55" viewBox="0 0 24 24"><path d="M17.65 6.35C16.2 4.9 14.21 4 12 4c-4.42 0-7.99 3.58-7.99 8s3.57 8 7.99 8c3.73 0 6.84-2.55 7.73-6h-2.08c-.82 2.33-3.04 4-5.65 4-3.31 0-6-2.69-6-6s2.69-6 6-6c1.66 0 3.14.69 4.22 1.78L13 11h7V4l-2.35 2.35z" fill="#0f77c0"/></svg>
<svg style="position:absolute;left:301.5px;top:324.29999999999995px" width="13" height="9" viewBox="0 0 13 9"><path d="M1 7 L6.5 1.5 L12 7" fill="none" stroke="#0f77c0" stroke-width="2"/></svg>
<div style="position:absolute;left:12.299999999999955px;top:366.6px;width:115.5px;height:38px;box-sizing:border-box;border:2px solid #f5a90d;border-radius:6px"></div>
<div style="position:absolute;left:27.50px;top:377.86px;font-size:16px;line-height:16px;color:#303030;white-space:pre;letter-spacing:-0.100px;">Unregistered</div>
<svg style="position:absolute;left:290.49px;top:365.40px" width="24.72" height="24.72" viewBox="0 0 24 24"><path d="M7 10l5 5 5-5z" fill="#666"/></svg>
<div style="position:absolute;left:27px;top:407.29999999999995px;width:286px;height:1px;background:#8a8a8a"></div>
<div style="position:absolute;left:27.5px;top:418.29999999999995px;width:285px;height:35.5px;box-sizing:border-box;border:1px solid #c8c8c8;border-radius:18px"></div>
<svg style="position:absolute;left:37.22px;top:424.22px" width="22.23" height="22.23" viewBox="0 0 24 24"><path d="M15.5 14h-.79l-.28-.27C15.41 12.59 16 11.11 16 9.5 16 5.91 13.09 3 9.5 3S3 5.91 3 9.5 5.91 16 9.5 16c1.61 0 3.09-.59 4.23-1.57l.27.28v.79l5 4.99L20.49 19l-4.99-5zm-6 0C7.01 14 5 11.99 5 9.5S7.01 5 9.5 5 14 7.01 14 9.5 11.99 14 9.5 14z" fill="#0f77c0"/></svg>
<div style="position:absolute;left:68.00px;top:428.46px;font-size:16px;line-height:16px;color:#8c8c8c;white-space:pre;letter-spacing:-0.080px;">Search</div>
<div style="position:absolute;left:12.900000000000091px;top:456.1px;width:233.4px;height:48.1px;box-sizing:border-box;border:2.5px solid #f5a90d;border-radius:6px"></div>
<div style="position:absolute;left:28px;top:471px;width:16px;height:16px;box-sizing:border-box;border:1.5px solid #8f8f8f;border-radius:3px"></div>
<div style="position:absolute;left:55.40px;top:471.86px;font-size:16px;line-height:16px;color:#303030;white-space:pre;letter-spacing:-0.090px;">Sample Save Model.dill</div>
<svg style="position:absolute;left:290px;top:474px;overflow:visible" width="10" height="22" viewBox="1850 664 10 22"><g fill="#0f77c0"><circle cx="1854.8" cy="669.8" r="2.1"/><circle cx="1854.8" cy="674.9" r="2.1"/><circle cx="1854.8" cy="680" r="2.1"/></g></svg>
<div style="position:absolute;left:9px;top:522.00px;width:321px;height:53px;background:#fff;border-radius:12px;box-shadow:0 1px 4px rgba(0,0,0,0.16)"></div>
<div style="position:absolute;left:54.40px;top:539.41px;font-size:17px;line-height:17px;color:#303030;white-space:pre;letter-spacing:0.325px;">Artifacts</div>
<svg style="position:absolute;left:301.5px;top:547.5px" width="13" height="9" viewBox="0 0 13 9"><path d="M1 1.5 L6.5 7 L12 1.5" fill="none" stroke="#0f77c0" stroke-width="2"/></svg>
<div style="position:absolute;left:9px;top:580.80px;width:321px;height:53px;background:#fff;border-radius:12px;box-shadow:0 1px 4px rgba(0,0,0,0.16)"></div>
<div style="position:absolute;left:54.40px;top:598.21px;font-size:17px;line-height:17px;color:#303030;white-space:pre;letter-spacing:-0.350px;">Files</div>
<svg style="position:absolute;left:301.5px;top:606.3px" width="13" height="9" viewBox="0 0 13 9"><path d="M1 1.5 L6.5 7 L12 1.5" fill="none" stroke="#0f77c0" stroke-width="2"/></svg>
<div style="position:absolute;left:9px;top:639.60px;width:321px;height:53px;background:#fff;border-radius:12px;box-shadow:0 1px 4px rgba(0,0,0,0.16)"></div>
<div style="position:absolute;left:54.40px;top:657.01px;font-size:17px;line-height:17px;color:#303030;white-space:pre;letter-spacing:0.084px;">Variable explorer</div>
<svg style="position:absolute;left:301.5px;top:665.1px" width="13" height="9" viewBox="0 0 13 9"><path d="M1 1.5 L6.5 7 L12 1.5" fill="none" stroke="#0f77c0" stroke-width="2"/></svg>
<svg style="position:absolute;left:20px;top:536px;overflow:visible" width="32" height="26" viewBox="1580 726 32 26"><path d="M1595.4 729.9 L1606.4 734.9 L1595.4 740 L1584.4 734.9 Z" fill="#0f77c0"/><g fill="none" stroke="#0f77c0" stroke-width="2.6" stroke-linejoin="round" stroke-linecap="round"><path d="M1585.6 738.7 L1595.4 743.1 L1605.2 738.7"/><path d="M1585.6 743.4 L1595.4 747.8 L1605.2 743.4"/></g></svg>
<svg style="position:absolute;left:20px;top:593px;overflow:visible" width="32" height="30" viewBox="1580 783 32 30"><rect x="1585.5" y="790" width="15.7" height="19.7" rx="1.2" fill="#0f77c0"/><path d="M1590.2 787.4 H1600.4 L1605.4 792 V805.6 Q1605.4 806.6 1604.4 806.6 H1590.2 Q1589.6 806.6 1589.6 805.6 V788.4 Q1589.6 787.4 1590.2 787.4 Z" fill="#e2e2e2" stroke="#0f77c0" stroke-width="1"/><path d="M1600.4 787.4 V791 Q1600.4 792 1601.4 792 H1605.4" fill="#f0ecea" stroke="#0f77c0" stroke-width="1"/></svg>
<svg style="position:absolute;left:20px;top:653px;overflow:visible" width="32" height="24" viewBox="1580 843 32 24"><path d="M1584.7 866 V848.5 Q1584.7 847.1 1586 847.1 H1605.2 Q1606.3 847.1 1606.3 848.5 V866" fill="none" stroke="#0f77c0" stroke-width="1.1"/><rect x="1584.2" y="847.1" width="22.6" height="4.1" rx="0.8" fill="#0f77c0"/><g fill="none" stroke="#0f77c0" stroke-width="1.15" stroke-linecap="round"><path d="M1590.4 855.6 Q1588.1 859 1589.7 862.4"/><path d="M1591.6 857.3 Q1594 856.3 1595.4 859.4 Q1596.9 862.6 1599.4 861.3"/><path d="M1598.7 856.5 Q1596.6 856.8 1595.4 859.4 Q1594.3 862.1 1592.2 862.1"/><path d="M1600.7 855.6 Q1602.7 859 1600.9 862.4"/></g></svg>
</div>
<svg style="position:absolute;left:1505px;top:645px;overflow:visible" width="75" height="50" viewBox="1505 645 75 50"><path d="M1572.6 670 L1541.16 652.72 A19.75 19.75 0 1 0 1541.16 687.28 Z" fill="#f5aa0f"/><text x="1535.7" y="678.1" font-size="22.4" fill="#fff" text-anchor="middle" font-family="Liberation Sans">9</text></svg>
</body></html>
